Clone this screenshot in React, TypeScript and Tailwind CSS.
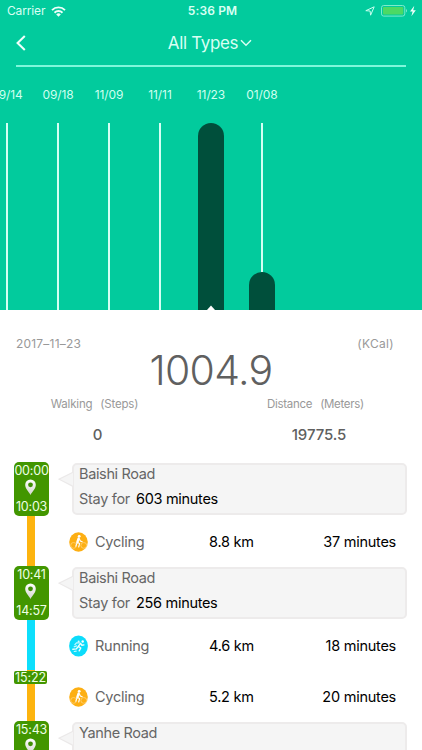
import React from "react";

type Day = { label: string; level: number; selected?: boolean };

const days: Day[] = [
  { label: "09/14", level: 0 },
  { label: "09/18", level: 0 },
  { label: "11/09", level: 0 },
  { label: "11/11", level: 0 },
  { label: "11/23", level: 187, selected: true },
  { label: "01/08", level: 38 },
];

function StatusBar() {
  return (
    <div className="flex h-[22px] items-center pl-[7px] pr-[5px] text-[12px] text-[#d9fff3]">
      <div className="flex flex-1 items-center gap-[6px]">
        <span className="tracking-[-0.15px]">Carrier</span>
        <svg width="15" height="11" viewBox="0 0 15 11" fill="none" stroke="#effffa" strokeWidth="1.9">
          <path d="M1 4.1a9.2 9.2 0 0 1 13 0" />
          <path d="M3.5 6.7a5.7 5.7 0 0 1 8 0" />
          <path d="M7.5 10.8 5.2 8.5a3.2 3.2 0 0 1 4.6 0Z" fill="#effffa" stroke="none" />
        </svg>
      </div>
      <span className="pl-px font-semibold tracking-[0.15px]">5:36 PM</span>
      <div className="flex flex-1 items-center justify-end">
        <svg className="mr-[6px]" width="10" height="10" viewBox="0 0 10 10" fill="none" stroke="#c9fff0" strokeWidth="1">
          <path d="M9.2.8 5.6 9.2 5.1 5 .8 4.7Z" strokeLinejoin="round" />
        </svg>
        <svg width="36" height="12" viewBox="0 0 36 12">
          <rect x="0.5" y="0.5" width="23.3" height="10.6" rx="2.2" fill="none" stroke="#7eebcc" />
          <rect x="2" y="2" width="20.3" height="7.6" rx="1" fill="#4cd964" />
          <path d="M25 4v3.6q1-.5 1-1.8T25 4Z" fill="#7eebcc" />
          <path d="M33.3.8 29 6.4h2.6l-1.2 4.8 4.4-6h-2.6Z" fill="#effffa" />
        </svg>
      </div>
    </div>
  );
}

function NavBar() {
  return (
    <div className="mx-4 grid h-[45px] grid-cols-[20px_1fr_20px] items-center border-b-2 border-[#7ff7db] pb-px text-[#d9fff3]">
      <svg width="10" height="16" viewBox="0 0 10 16" fill="none" stroke="#effffa" strokeWidth="2.1">
        <path d="M8.8 1 1.6 8l7.2 7" />
      </svg>
      <div className="flex items-center justify-center gap-[2px] pr-[2px]">
        <span className="text-[17px] leading-[22px] tracking-[-0.35px]">All Types</span>
        <svg width="12" height="8" viewBox="0 0 12 8" fill="none" stroke="currentColor" strokeWidth="1.5">
          <path d="m1 1.2 5 5 5-5" />
        </svg>
      </div>
    </div>
  );
}

function DayColumn({ day }: { day: Day }) {
  return (
    <div className="flex w-[51px] shrink-0 flex-col items-center">
      <span className="ml-px mt-[20px] text-[12px] leading-[16px] tracking-[-0.1px] text-[#d0fff0]">{day.label}</span>
      <div className="mt-[20px] flex h-[187px] flex-col items-center">
        <div className="w-[2px] flex-1 bg-[#d5fff4]" />
        {day.level > 0 && (
          <div
            className="flex w-[26px] items-end justify-center rounded-t-full bg-[#004f3b]"
            style={{ height: day.level }}
          >
            {day.selected && (
              <svg width="8" height="5" viewBox="0 0 8 5">
                <path d="M0 5 4 .5 8 5Z" fill="#fff" />
              </svg>
            )}
          </div>
        )}
      </div>
    </div>
  );
}

function Summary() {
  return (
    <section className="h-[153px] px-4 text-[#999]">
      <div className="flex h-[86px] justify-between pt-[26px] text-[12px] leading-[16px]">
        <span className="w-[100px] tracking-[0.2px]">2017–11–23</span>
        <span className="mt-[10px] text-[41px] font-light leading-[48px] tracking-[-0.7px] text-[#606060]">1004.9</span>
        <span className="w-[100px] pr-[12px] text-right tracking-[0.3px]">(KCal)</span>
      </div>
      <div className="flex justify-between pl-[35px] pr-[42px] text-[11.5px] leading-[16px]">
        <div className="flex w-[87px] flex-col items-center">
          <span className="flex gap-[8px] whitespace-nowrap tracking-[-0.2px]">
            <span>Walking</span>
            <span>(Steps)</span>
          </span>
          <span className="mt-[13px] pl-[6px] text-[15px] font-medium leading-[20px] text-[#606060]">0</span>
        </div>
        <div className="flex w-[97px] flex-col items-center">
          <span className="flex gap-[8px] whitespace-nowrap tracking-[-0.3px]">
            <span>Distance</span>
            <span>(Meters)</span>
          </span>
          <span className="mt-[13px] pl-[7px] text-[15px] font-medium leading-[20px] tracking-[-0.1px] text-[#606060]">19775.5</span>
        </div>
      </div>
    </section>
  );
}

function Pin() {
  return (
    <svg className="-ml-px -mt-[3px]" width="12" height="17" viewBox="0 0 12 17">
      <defs>
        <linearGradient id="pin" x1="0" y1="0" x2="0" y2="1">
          <stop offset="0" stopColor="#fff" />
          <stop offset="1" stopColor="#d3d6cf" />
        </linearGradient>
      </defs>
      <path
        d="M5.5.5A5.3 5.3 0 0 0 .2 6C.2 9.6 4.1 13 5.5 16c1.4-3 5.3-6.4 5.3-10A5.3 5.3 0 0 0 5.5.5Z"
        fill="url(#pin)"
      />
      <circle cx="5.5" cy="5.8" r="2.4" fill="#3f8f05" />
    </svg>
  );
}

function Stop({ from, to, place, minutes }: { from: string; to: string; place: string; minutes: string }) {
  return (
    <div className="flex h-[52px] shrink-0 items-center pl-[14px]">
      <div className="z-10 flex h-[54px] w-[35px] shrink-0 flex-col items-center justify-between rounded-[5px] bg-[#429600] py-px text-[12.5px] leading-[16px] tracking-[-0.2px] text-[#efffe5]">
        <span>{from}</span>
        <Pin />
        <span>{to}</span>
      </div>
      <svg className="z-10 ml-[9px] -mr-[2px] -mt-[21px] shrink-0" width="16" height="18" viewBox="0 0 16 18">
        <path d="M15 2.2 1 9.2l14 7.2" fill="#f5f5f5" stroke="#ebe9e9" strokeWidth="1.2" />
      </svg>
      <div className="h-[52px] w-[335px] rounded-[5px] border-2 border-[#edebeb] bg-[#f5f5f5] pl-[5px] text-[14.5px] text-[#666]">
        <div className="-mt-px leading-[20px] tracking-[-0.35px]">{place}</div>
        <div className="mt-[5px] flex gap-[6px] leading-[20px] tracking-[-0.3px]">
          <span>Stay for</span>
          <span className="text-black">{minutes} minutes</span>
        </div>
      </div>
    </div>
  );
}

function CyclingIcon() {
  return (
    <svg width="19" height="20" viewBox="0 0 19 20" fill="none">
      <ellipse cx="9.5" cy="10" rx="9.3" ry="9.7" fill="#fdaf13" />
      <circle cx="4.6" cy="13.4" r="2.9" stroke="#ffd27a" strokeWidth=".8" />
      <circle cx="14.8" cy="13.4" r="2.9" stroke="#ffd27a" strokeWidth=".8" />
      <circle cx="10.2" cy="4.3" r="1.4" fill="#fff" />
      <path d="M9.6 6.6 8.4 10.2" stroke="#fff" strokeWidth="2.4" strokeLinecap="round" />
      <path
        d="m10.4 7 1 2 1.8.7M8.5 10.6l2.1 1-.9 3.4M8.1 10.6l-1.3 3.6"
        stroke="#fff"
        strokeWidth="1.1"
        strokeLinecap="round"
      />
    </svg>
  );
}

function RunningIcon() {
  return (
    <svg width="19" height="22" viewBox="0 0 19 22" fill="none">
      <ellipse cx="9.5" cy="11" rx="9.4" ry="10.6" fill="#0ddcfb" />
      <circle cx="13.7" cy="6.5" r="1.2" fill="#fff" />
      <circle cx="9.6" cy="6.6" r="1" fill="#d6fbff" />
      <path
        d="m11.6 8.3-2.3 3.1 2.5 1.6-1.6 2.8M8.9 12l-1.6 1.9-3.4.4M11.8 8.5l1.1 1.8 2-.4"
        stroke="#f2feff"
        strokeWidth="1.4"
        strokeLinecap="round"
        strokeLinejoin="round"
      />
      <path
        d="m10.5 7.9-3-.1-1.6 1.9M7.6 10.9l-2.4.9M7.2 16.1l-2 .4"
        stroke="#c6f8ff"
        strokeWidth="1.2"
        strokeLinecap="round"
      />
    </svg>
  );
}

function Trip({ kind, distance, duration }: { kind: "Cycling" | "Running"; distance: string; duration: string }) {
  const cycling = kind === "Cycling";
  return (
    <div className="flex h-[52px] shrink-0 items-center pl-[27px] pr-[26px] text-[14.5px] leading-[20px] tracking-[-0.25px] text-black">
      <div className={cycling ? "h-full w-2 bg-[#fdb40f]" : "h-full w-2 bg-[#0ddffc]"} />
      <div className="ml-[34px] flex w-[26px] items-center pt-px">{cycling ? <CyclingIcon /> : <RunningIcon />}</div>
      <span className="w-[114px] pt-px text-[#666]">{kind}</span>
      <span className="pt-px">{distance}</span>
      <span className="ml-auto pt-px">{duration}</span>
    </div>
  );
}

function Junction({ time }: { time: string }) {
  return (
    <div className="relative z-10 -mb-[14px] ml-[14px] h-[13px] w-[33px] shrink-0 rounded-[2px] bg-[#429600] text-center text-[12.5px] leading-[13px] tracking-[-0.1px] text-[#efffe5]">
      {time}
    </div>
  );
}

export default function App() {
  return (
    <div className="flex h-[750px] w-[422px] flex-col overflow-hidden bg-white font-['Inter','Liberation_Sans',sans-serif]">
      <header className="h-[310px] shrink-0 overflow-hidden bg-[#02cb9d]">
        <StatusBar />
        <NavBar />
        <div className="-ml-[19px] flex">
          {days.map((day) => (
            <DayColumn key={day.label} day={day} />
          ))}
        </div>
      </header>
      <Summary />
      <main className="-mt-1 flex min-h-0 flex-1 flex-col overflow-hidden pt-1">
        <Stop from="00:00" to="10:03" place="Baishi Road" minutes="603" />
        <Trip kind="Cycling" distance="8.8 km" duration="37 minutes" />
        <Stop from="10:41" to="14:57" place="Baishi Road" minutes="256" />
        <Trip kind="Running" distance="4.6 km" duration="18 minutes" />
        <Junction time="15:22" />
        <Trip kind="Cycling" distance="5.2 km" duration="20 minutes" />
        <Stop from="15:43" to="16:20" place="Yanhe Road" minutes="37" />
      </main>
    </div>
  );
}
